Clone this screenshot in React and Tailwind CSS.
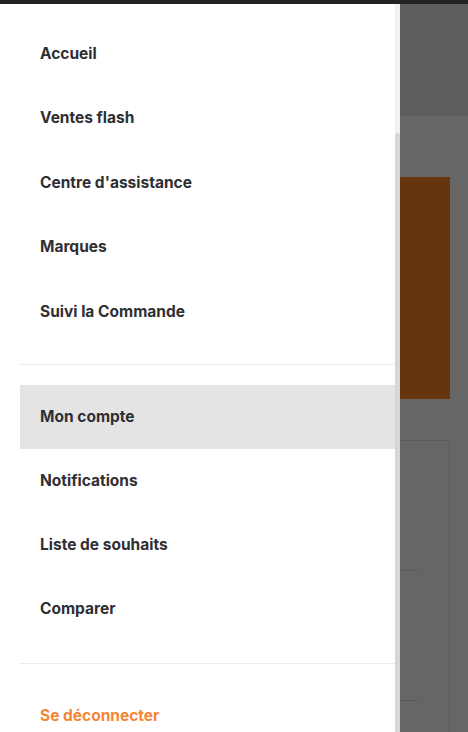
import React from 'react';

const mainLinks = ['Accueil', 'Ventes flash', "Centre d'assistance", 'Marques', 'Suivi la Commande'];
const accountLinks = ['Mon compte', 'Notifications', 'Liste de souhaits', 'Comparer'];

const NavItem = ({ label, active, danger, tall }) => (
  <a
    href="#"
    className={
      'flex items-center px-5 text-[15.5px] font-bold ' +
      (tall ? 'h-[64.5px] ' : 'h-16 ') +
      (active ? 'bg-[#e4e4e4] ' : '') +
      (danger ? 'text-[#f68634]' : 'text-[#2f2f33]')
    }
  >
    {label}
  </a>
);

const App = () => {
  return (
    <div
      className="flex h-[732px] w-[468px] flex-col overflow-hidden bg-[#666666]"
      style={{ fontFamily: 'Inter, "Noto Sans", sans-serif' }}
    >
      <div className="h-1 bg-[#222222]" />

      <div className="flex min-h-0 flex-1">
        {/* drawer */}
        <nav className="w-[395px] bg-white pl-5">
          <div className="pt-[17px] pb-[20.5px]">
            {mainLinks.map((l) => (
              <NavItem key={l} label={l} tall />
            ))}
          </div>
          <div className="border-t border-[#ececec] pt-5 pb-[22px]">
            {accountLinks.map((l, i) => (
              <NavItem key={l} label={l} active={i === 0} />
            ))}
          </div>
          <div className="border-t border-[#ececec] pt-5">
            <NavItem label="Se déconnecter" danger />
          </div>
        </nav>

        {/* scrollbar */}
        <div className="flex w-[5px] flex-col bg-[#f1f1f1]">
          <div className="mt-[129px] flex-1 rounded-t-sm bg-[#d6d6d6]" />
        </div>

        {/* dimmed page behind */}
        <div className="flex-1">
          <div className="h-28 bg-[#5d5d5d]" />
          <div className="mt-[61px] h-[222px] w-[50px] bg-[#66350f]" />
          <div className="mt-[41px] h-[400px] w-[50px] border-t border-r border-[#5c5c5c]">
            <div className="mt-[129px] h-px w-[19px] bg-[#5a5a5a]" />
            <div className="mt-[129px] h-px w-[19px] bg-[#5a5a5a]" />
          </div>
        </div>
      </div>
    </div>
  );
};

export default App;
